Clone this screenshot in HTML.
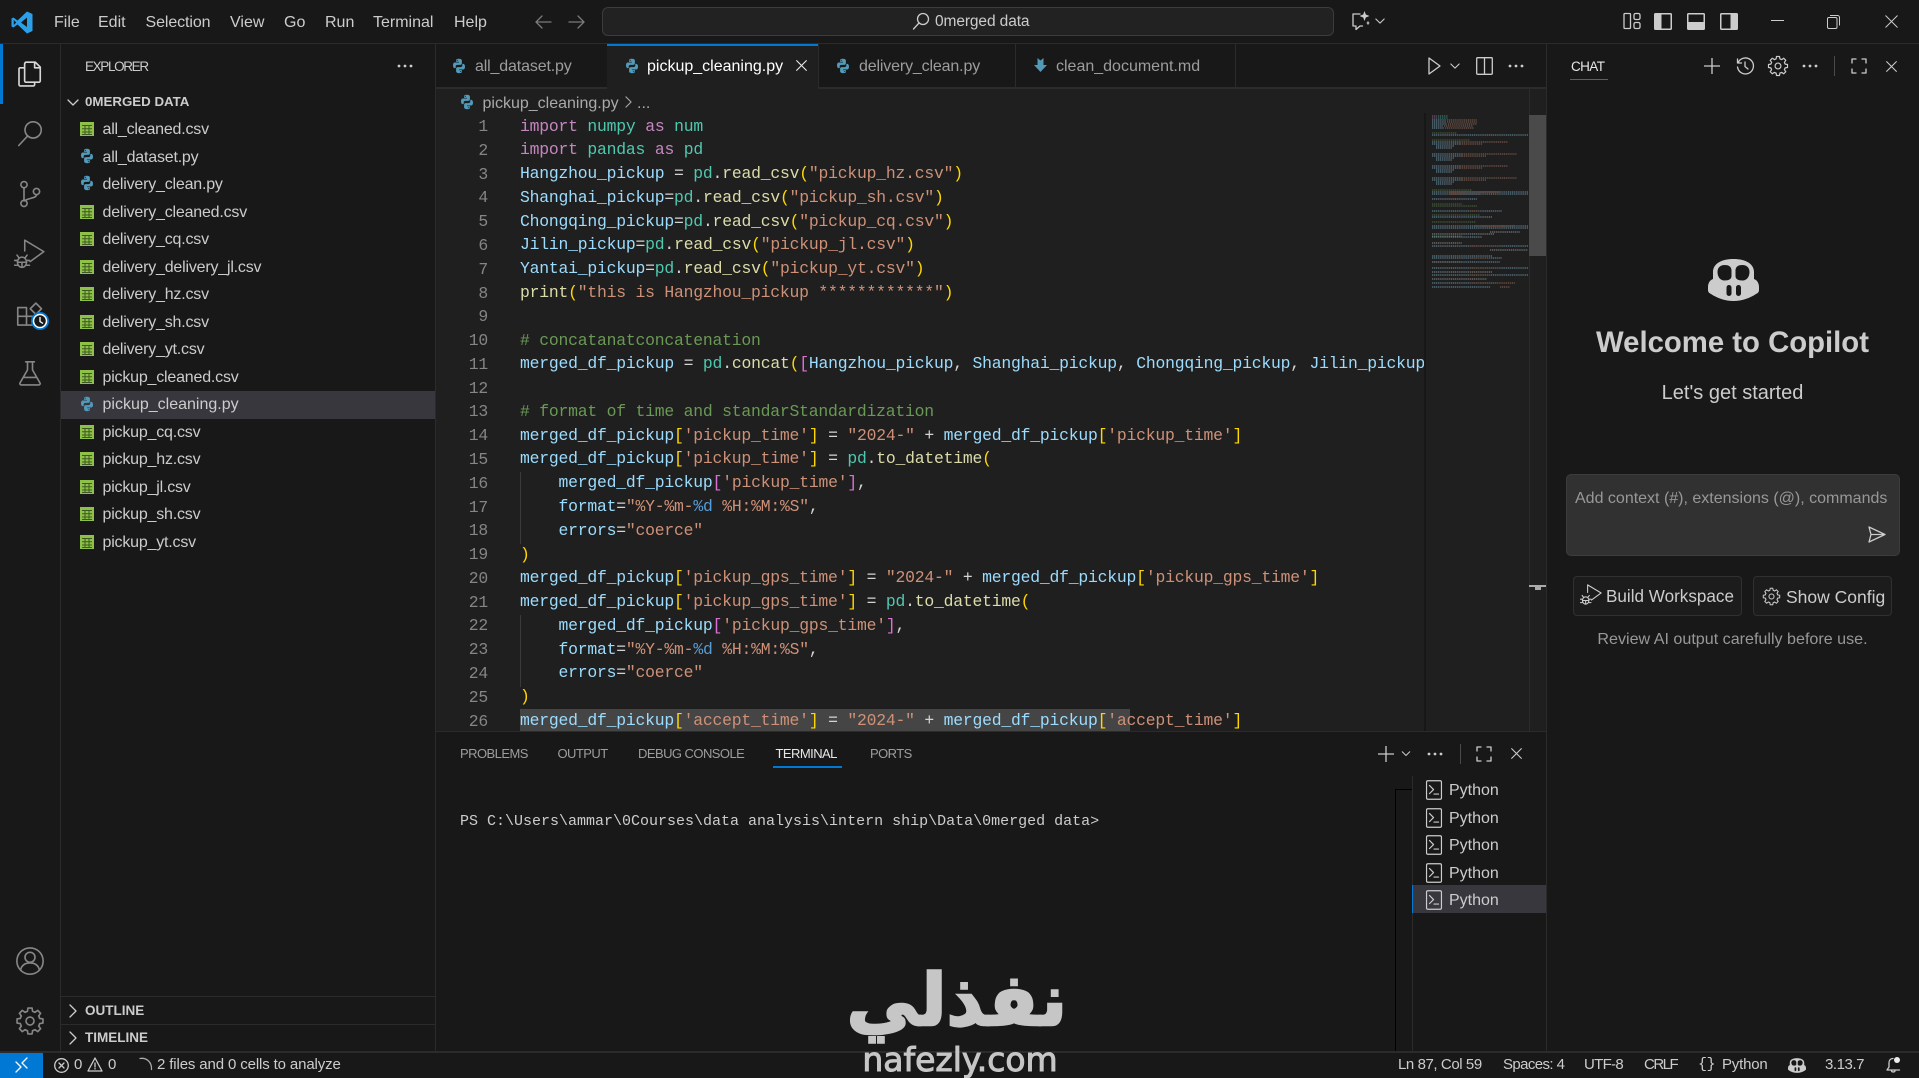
<!DOCTYPE html>
<html lang="en"><head><meta charset="utf-8"><title>pickup_cleaning.py - 0merged data</title>
<style>
html,body{margin:0;padding:0;background:#181818;width:1919px;height:1078px;overflow:hidden}
body{position:relative;font-family:"Liberation Sans",sans-serif;font-size:16px;color:#ccc}
.b{position:absolute;display:block}
.t{position:absolute;white-space:pre;line-height:20px;height:20px}
svg{position:absolute;overflow:visible}
.s{fill:none;stroke:currentColor;stroke-width:1.3;stroke-linecap:round;stroke-linejoin:round}
.h{font-weight:bold;font-size:13.3px}
.fl{letter-spacing:-.2px}
.tab{color:#9d9d9d;letter-spacing:-.15px}
.p{font-size:13px;letter-spacing:-.55px;color:#9d9d9d}
.st{font-size:15px;color:#ccc;letter-spacing:-.2px}
#codebg,#code{position:absolute;left:0;top:113px;width:1424px;height:618px;overflow:hidden;font-family:"Liberation Mono",monospace}
.l{position:absolute;left:520px;white-space:pre;font-size:16.4px;letter-spacing:-.21px;line-height:24px;height:24px;color:#d4d4d4}
.n{position:absolute;left:448px;width:40px;text-align:right;font-size:16.4px;letter-spacing:-.24px;line-height:24px;color:#858585}
.k{color:#c586c0}.m{color:#4ec9b0}.v{color:#9cdcfe}.f{color:#dcdcaa}.q{color:#ce9178}.c{color:#6a9955}.y{color:#ffd700}.u{color:#da70d6}.w{color:#569cd6}
</style></head><body>
<svg width="0" height="0" style="position:absolute">
<defs>
<symbol id="py" viewBox="0 0 16 16"><g fill="#519aba"><path d="M7.9 .8C5 .8 5.1 2 5.1 2v1.9h2.9v.6H3.9S2 4.3 2 7.2s1.6 2.9 1.6 2.9h1.1V8.6s0-1.7 1.7-1.7h2.9s1.6 0 1.6-1.6V2.5S10.8 .8 7.9 .8zM6.3 1.8a.55.55 0 1 1 0 1.1.55.55 0 0 1 0-1.1z"/><path transform="rotate(180 8 8)" d="M7.9 .8C5 .8 5.1 2 5.1 2v1.9h2.9v.6H3.9S2 4.3 2 7.2s1.6 2.9 1.6 2.9h1.1V8.6s0-1.7 1.7-1.7h2.9s1.6 0 1.6-1.6V2.5S10.8 .8 7.9 .8zM6.3 1.8a.55.55 0 1 1 0 1.1.55.55 0 0 1 0-1.1z"/></g></symbol>
<symbol id="csv" viewBox="0 0 14 14"><rect width="14" height="14" fill="#8dc149"/><path d="M2 3.5h10M2 6.8h10M2 10h10M2 12.5h10M5 3.5v9M9 3.5v9" stroke="#3d5a1e" stroke-width="1" fill="none"/></symbol>
<symbol id="gearP" viewBox="0 0 24 24"><g class="s"><circle cx="12" cy="12" r="3.2"/><g id="tt"><path id="t1" d="M8.94 4.61 9.93 4.27 10.36 1.63H13.64L14.07 4.27 15.06 4.61"/><use href="#t1" transform="rotate(45 12 12)"/><use href="#t1" transform="rotate(90 12 12)"/><use href="#t1" transform="rotate(135 12 12)"/><use href="#t1" transform="rotate(180 12 12)"/><use href="#t1" transform="rotate(225 12 12)"/><use href="#t1" transform="rotate(270 12 12)"/><use href="#t1" transform="rotate(315 12 12)"/></g></g></symbol>
<symbol id="cop" viewBox="0 0 51 42"><path fill="currentColor" d="M0 28c0-4 2-7 5-8V13C5 5 13 0 25.5 0S46 5 46 13v7c3 1 5 4 5 8v3c0 2-1 3-3 4-6 4-14 7-22.5 7S9 39 3 35c-2-1-3-2-3-4z"/><path fill="#181818" d="M9.500 13c0-4.500 3-7 7-7s7 1.500 7 5.500v5.500c0 3-2.500 4.500-7 4.500s-7-4-7-8.500zM41.500 13c0-4.500-3-7-7-7s-7 1.500-7 5.500v5.500c0 3 2.500 4.500 7 4.500s7-4 7-8.500z"/><rect x="18.500" y="26" width="5" height="11" rx="2.500" fill="#181818"/><rect x="28" y="26" width="5" height="11" rx="2.500" fill="#181818"/></symbol>
<symbol id="term" viewBox="0 0 18 22"><rect x=".8" y=".8" width="16.400" height="20.400" rx="1.500" class="s"/><path class="s" d="M4 6l4.500 4.500L4 15M9 15.500h5"/></symbol>
<symbol id="max" viewBox="0 0 16 16"><path class="s" stroke-width="1.300" d="M1 5V1h4M11 1h4v4M15 11v4h-4M5 15H1v-4"/></symbol>
<symbol id="x" viewBox="0 0 16 16"><path class="s" d="M2 2l12 12M14 2L2 14"/></symbol>
<symbol id="plus" viewBox="0 0 16 16"><path class="s" d="M8 0v16M0 8h16"/></symbol>
<symbol id="chev" viewBox="0 0 12 8"><path class="s" d="M1 1l5 5 5-5"/></symbol>
<symbol id="chr" viewBox="0 0 8 14"><path class="s" d="M1 1l6 6-6 6"/></symbol>
<symbol id="dots" viewBox="0 0 16 4"><g fill="currentColor"><circle cx="2" cy="2" r="1.400"/><circle cx="8" cy="2" r="1.400"/><circle cx="14" cy="2" r="1.400"/></g></symbol>
<symbol id="bug" viewBox="0 0 26 26"><g class="s"><path d="M9 10V1l16 9.600-11.500 8.400"/><ellipse cx="6.700" cy="19.500" rx="3.800" ry="4.300"/><path d="M3 18H.5M3 22H.5M10.500 18H13M10.500 22H13M4 15.500l-1.500-2M9.500 15.500l1.500-2M3 19.500h7.500M6.700 19.500v4"/></g></symbol>
</defs></svg>

<!-- surfaces -->
<div class="b" style="left:0;top:0;width:1919px;height:43px;background:#181818"></div>
<div class="b" style="left:0;top:43px;width:1919px;height:1px;background:#2b2b2b"></div>
<div class="b" style="left:435px;top:44px;width:1111px;height:687px;background:#1f1f1f"></div>
<div class="b" style="left:435px;top:44px;width:1111px;height:43px;background:#181818"></div>
<div class="b" style="left:607px;top:44px;width:211px;height:44px;background:#1f1f1f;border-top:2px solid #0078d4;box-sizing:border-box"></div>
<div class="b" style="left:435px;top:87px;width:172px;height:1.500px;background:#2b2b2b"></div>
<div class="b" style="left:818px;top:87px;width:728px;height:1.500px;background:#2b2b2b"></div>
<div class="b" style="left:818px;top:44px;width:1px;height:43px;background:#2b2b2b"></div>
<div class="b" style="left:1015px;top:44px;width:1px;height:43px;background:#2b2b2b"></div>
<div class="b" style="left:1235px;top:44px;width:1px;height:43px;background:#2b2b2b"></div>
<div class="b" style="left:60px;top:44px;width:1px;height:1007px;background:#2b2b2b"></div>
<div class="b" style="left:434.500px;top:44px;width:1px;height:1007px;background:#2b2b2b"></div>
<div class="b" style="left:1546px;top:44px;width:1px;height:1007px;background:#2b2b2b"></div>
<div class="b" style="left:436px;top:731px;width:1110px;height:1px;background:#2b2b2b"></div>
<div class="b" style="left:0;top:1051px;width:1919px;height:2px;background:#2b2b2b"></div>
<div class="b" style="left:0;top:44px;width:2.500px;height:60px;background:#0078d4"></div>

<!-- title bar -->
<svg style="left:11px;top:11px;color:#2e9fe6" width="22" height="23" viewBox="0 0 22 23"><path fill="#2b9fe8" d="M16 .5 21.500 3v17L16 22.500 6.500 13.500 2.500 16.500.5 15.500V7.500l2-1 4 3L16 .5zM16 6.500 10 11.500l6 4.500V6.500zM2.800 9v5l2.400-2.500L2.800 9z"/></svg>
<span class="t" style="left:54px;top:12.500px">File</span>
<span class="t" style="left:98px;top:12.500px">Edit</span>
<span class="t" style="left:145.500px;top:12.500px;letter-spacing:-.1px">Selection</span>
<span class="t" style="left:230px;top:12.500px">View</span>
<span class="t" style="left:284px;top:12.500px">Go</span>
<span class="t" style="left:325px;top:12.500px">Run</span>
<span class="t" style="left:373px;top:12.500px">Terminal</span>
<span class="t" style="left:454px;top:12.500px">Help</span>
<svg style="left:535px;top:15px;color:#7a7a7a" width="17" height="14" viewBox="0 0 17 14"><path class="s" d="M16 7H1M7 1 1 7l6 6"/></svg>
<svg style="left:568px;top:15px;color:#7a7a7a" width="17" height="14" viewBox="0 0 17 14"><path class="s" d="M1 7h15M10 1l6 6-6 6"/></svg>
<div class="b" style="left:602px;top:7px;width:732px;height:29px;box-sizing:border-box;background:#222;border:1px solid #3c3c3c;border-radius:6px"></div>
<svg style="left:912px;top:12px;color:#ccc" width="18" height="18" viewBox="0 0 18 18"><circle class="s" cx="11" cy="7" r="5.500"/><path class="s" d="M7 11 1.500 17"/></svg>
<span class="t" style="left:935px;top:12px;letter-spacing:-.1px;font-size:15.500px">0merged data</span>
<svg style="left:1351px;top:11px;color:#ccc" width="20" height="20" viewBox="0 0 20 20"><path class="s" stroke-width="1.500" d="M9 3H2v12h3v3.500L9 15h2.500M17 11v2"/><path fill="#ccc" d="M13.500 0l1.300 3.500L18.500 5l-3.700 1.500-1.300 3.500-1.300-3.500L8.500 5l3.700-1.500zM17 10l.6 1.500 1.400.5-1.400.5-.6 1.500-.6-1.500-1.400-.5 1.400-.5z"/></svg>
<svg style="left:1375px;top:18px;color:#ccc" width="10" height="7"><use href="#chev" width="10" height="7"/></svg>
<svg style="left:1623px;top:12px;color:#ccc" width="18" height="18" viewBox="0 0 18 18"><rect class="s" x="1" y="1.500" width="6.500" height="15" rx="1"/><rect class="s" x="11" y="1.500" width="6" height="6" rx="1.500"/><rect class="s" x="11" y="10.500" width="6" height="6" rx="1.500"/></svg>
<svg style="left:1654px;top:12px;color:#ccc" width="18" height="18" viewBox="0 0 18 18"><rect x="0" y="1" width="18" height="17" rx="1.500" fill="#ccc"/><rect x="7.500" y="2.500" width="9" height="14" fill="#181818"/></svg>
<svg style="left:1687px;top:12px;color:#ccc" width="18" height="18" viewBox="0 0 18 18"><rect x="0" y="1" width="18" height="17" rx="1.500" fill="#ccc"/><rect x="1.500" y="2.500" width="15" height="7.500" fill="#181818"/></svg>
<svg style="left:1720px;top:12px;color:#ccc" width="18" height="18" viewBox="0 0 18 18"><rect x="0" y="1" width="18" height="17" rx="1.500" fill="#ccc"/><rect x="1.500" y="2.500" width="9" height="14" fill="#181818"/></svg>
<div class="b" style="left:1771px;top:20px;width:13px;height:1px;background:#ccc"></div>
<svg style="left:1827px;top:15px;color:#ccc" width="13" height="14" viewBox="0 0 13 14"><rect x=".5" y="2.500" width="9.500" height="11" rx="1.500" fill="none" stroke="#ccc"/><path fill="none" stroke="#ccc" d="M3 .5h7.500a2 2 0 0 1 2 2v8"/></svg>
<svg style="left:1885px;top:15px;color:#ccc" width="13" height="13" viewBox="0 0 13 13"><path fill="none" stroke="#ccc" d="M.5.500l12 12M12.500.5l-12 12"/></svg>

<!-- activity bar -->
<svg style="left:14px;top:59px;color:#d7d7d7" width="30" height="30" viewBox="0 0 24 24"><g class="s" stroke-width="1.250"><path d="M9.500 2.500H17l4 4v11a1 1 0 0 1-1 1H9.500a1 1 0 0 1-1-1v-13a2 2 0 0 1 1-2z"/><path d="M16.500 2.500V7H21"/><path d="M8.500 7H5a1 1 0 0 0-1 1v12.500a1 1 0 0 0 1 1h10.500a1 1 0 0 0 1-1V18.500"/></g></svg>
<svg style="left:15px;top:118px;color:#868686" width="30" height="30" viewBox="0 0 24 24"><circle class="s" cx="14.500" cy="9.500" r="6.500"/><path class="s" d="M10 14.500 3 22"/></svg>
<svg style="left:14px;top:179px;color:#868686" width="30" height="30" viewBox="0 0 24 24"><g class="s"><circle cx="8" cy="4.500" r="2.500"/><circle cx="8" cy="19.500" r="2.500"/><circle cx="18" cy="10" r="2.500"/><path d="M8 7v10M18 12.500c0 3-6 2.500-10 5"/></g></svg>
<svg style="left:14px;top:239px;color:#868686" width="31" height="31"><use href="#bug" width="31" height="31"/></svg>
<svg style="left:14px;top:300px;color:#868686" width="30" height="30" viewBox="0 0 24 24"><g class="s"><path d="M3 6h7v7H3zM3 13h7v7H3zM10 13h7v7h-7z"/><path d="M13 7l4.500-4.500L22 7l-4.500 4.500z"/></g></svg>
<svg style="left:30px;top:311px" width="20" height="20" viewBox="0 0 20 20"><circle cx="10" cy="10" r="9" fill="#0078d4"/><circle cx="10" cy="10" r="6.500" fill="#181818" stroke="#fff" stroke-width="1.500"/><path d="M10 6v4.500l3 2" fill="none" stroke="#fff" stroke-width="1.300"/></svg>
<svg style="left:15px;top:358px;color:#868686" width="30" height="30" viewBox="0 0 24 24"><path class="s" d="M8.500 3h7M10 3v6.500L4 20a1 1 0 0 0 .9 1.500h14.200A1 1 0 0 0 20 20L14 9.500V3M7.500 15.500h9"/></svg>
<svg style="left:15px;top:946px;color:#868686" width="30" height="30" viewBox="0 0 24 24"><g class="s"><circle cx="12" cy="12" r="10.500"/><circle cx="12" cy="9" r="4"/><path d="M4.500 19c1-4 4-5.500 7.500-5.500s6.500 1.500 7.500 5.500"/></g></svg>
<svg style="left:15px;top:1006px;color:#868686" width="30" height="30"><use href="#gearP" width="30" height="30"/></svg>

<!-- sidebar -->
<span class="t" style="left:85px;top:57px;font-size:13.500px;letter-spacing:-1.350px;color:#ccc">EXPLORER</span>
<svg style="left:397px;top:64px;color:#ccc" width="16" height="4"><use href="#dots" width="16" height="4"/></svg>
<svg style="left:67px;top:99px;color:#ccc" width="12" height="8"><use href="#chev" width="12" height="8"/></svg>
<span class="t h" style="left:85px;top:92px">0MERGED DATA</span>
<div class="b" style="left:61px;top:390.500px;width:373.500px;height:28px;background:#37373d"></div>
<svg style="left:80px;top:122px" width="14" height="14"><use href="#csv" width="14" height="14"/></svg><span class="t fl" style="left:102.500px;top:120.200px">all_cleaned.csv</span>
<svg style="left:79px;top:148px" width="16" height="16"><use href="#py" width="16" height="16"/></svg><span class="t fl" style="left:102.500px;top:147.700px">all_dataset.py</span>
<svg style="left:79px;top:175px" width="16" height="16"><use href="#py" width="16" height="16"/></svg><span class="t fl" style="left:102.500px;top:175.200px">delivery_clean.py</span>
<svg style="left:80px;top:205px" width="14" height="14"><use href="#csv" width="14" height="14"/></svg><span class="t fl" style="left:102.500px;top:202.700px">delivery_cleaned.csv</span>
<svg style="left:80px;top:232px" width="14" height="14"><use href="#csv" width="14" height="14"/></svg><span class="t fl" style="left:102.500px;top:230.200px">delivery_cq.csv</span>
<svg style="left:80px;top:260px" width="14" height="14"><use href="#csv" width="14" height="14"/></svg><span class="t fl" style="left:102.500px;top:257.700px">delivery_delivery_jl.csv</span>
<svg style="left:80px;top:287px" width="14" height="14"><use href="#csv" width="14" height="14"/></svg><span class="t fl" style="left:102.500px;top:285.200px">delivery_hz.csv</span>
<svg style="left:80px;top:315px" width="14" height="14"><use href="#csv" width="14" height="14"/></svg><span class="t fl" style="left:102.500px;top:312.700px">delivery_sh.csv</span>
<svg style="left:80px;top:342px" width="14" height="14"><use href="#csv" width="14" height="14"/></svg><span class="t fl" style="left:102.500px;top:340.200px">delivery_yt.csv</span>
<svg style="left:80px;top:370px" width="14" height="14"><use href="#csv" width="14" height="14"/></svg><span class="t fl" style="left:102.500px;top:367.700px">pickup_cleaned.csv</span>
<svg style="left:79px;top:396px" width="16" height="16"><use href="#py" width="16" height="16"/></svg><span class="t" style="left:102.500px;top:395.200px">pickup_cleaning.py</span>
<svg style="left:80px;top:425px" width="14" height="14"><use href="#csv" width="14" height="14"/></svg><span class="t fl" style="left:102.500px;top:422.700px">pickup_cq.csv</span>
<svg style="left:80px;top:452px" width="14" height="14"><use href="#csv" width="14" height="14"/></svg><span class="t fl" style="left:102.500px;top:450.200px">pickup_hz.csv</span>
<svg style="left:80px;top:480px" width="14" height="14"><use href="#csv" width="14" height="14"/></svg><span class="t fl" style="left:102.500px;top:477.700px">pickup_jl.csv</span>
<svg style="left:80px;top:507px" width="14" height="14"><use href="#csv" width="14" height="14"/></svg><span class="t fl" style="left:102.500px;top:505.200px">pickup_sh.csv</span>
<svg style="left:80px;top:535px" width="14" height="14"><use href="#csv" width="14" height="14"/></svg><span class="t fl" style="left:102.500px;top:532.700px">pickup_yt.csv</span>
<div class="b" style="left:61px;top:996px;width:374px;height:1px;background:#2b2b2b"></div>
<div class="b" style="left:61px;top:1024px;width:374px;height:1px;background:#2b2b2b"></div>
<svg style="left:69px;top:1004px;color:#ccc" width="8" height="14"><use href="#chr" width="8" height="14"/></svg>
<span class="t h" style="left:85px;top:1001px;font-size:13.500px">OUTLINE</span>
<svg style="left:69px;top:1031px;color:#ccc" width="8" height="14"><use href="#chr" width="8" height="14"/></svg>
<span class="t h" style="left:85px;top:1028px;font-size:13.500px">TIMELINE</span>

<!-- tabs -->
<svg style="left:451px;top:58px" width="16" height="16"><use href="#py" width="16" height="16"/></svg>
<span class="t tab" style="left:475px;top:57px">all_dataset.py</span>
<svg style="left:624px;top:58px" width="16" height="16"><use href="#py" width="16" height="16"/></svg>
<span class="t" style="left:647px;top:57px;color:#fff">pickup_cleaning.py</span>
<svg style="left:795px;top:59px;color:#eee" width="13" height="13"><use href="#x" width="13" height="13"/></svg>
<svg style="left:835px;top:58px" width="16" height="16"><use href="#py" width="16" height="16"/></svg>
<span class="t tab" style="left:859px;top:57px">delivery_clean.py</span>
<svg style="left:1034px;top:58px" width="13" height="14" viewBox="0 0 13 14"><path fill="#519aba" d="M3.500 0 6.500 2.500 9.500 0V7H13L6.500 14 0 7H3.500Z"/></svg>
<span class="t" style="left:1056px;top:57px;color:#9d9d9d">clean_document.md</span>
<svg style="left:1428px;top:57px;color:#ccc" width="13" height="18" viewBox="0 0 13 18"><path class="s" d="M1 1l11 8-11 8z"/></svg>
<svg style="left:1450px;top:63px;color:#ccc" width="10" height="7"><use href="#chev" width="10" height="7"/></svg>
<svg style="left:1476px;top:57px;color:#ccc" width="17" height="18" viewBox="0 0 17 18"><rect class="s" x=".7" y=".7" width="15.600" height="16.600" rx="1"/><path class="s" d="M8.500 1v16"/></svg>
<svg style="left:1508px;top:64px;color:#ccc" width="16" height="4"><use href="#dots" width="16" height="4"/></svg>

<!-- breadcrumb -->
<svg style="left:459px;top:94px" width="16" height="16"><use href="#py" width="16" height="16"/></svg>
<span class="t" style="left:482.500px;top:93.500px;color:#a9a9a9">pickup_cleaning.py</span>
<svg style="left:625px;top:96px;color:#a9a9a9" width="7" height="12"><use href="#chr" width="7" height="12"/></svg>
<span class="t" style="left:637px;top:93.500px;color:#a9a9a9">...</span>

<!-- code -->
<div id="codebg">
<div class="b" style="left:520.400px;top:359px;width:1px;height:72px;background:#3a3a3a"></div>
<div class="b" style="left:520.400px;top:502px;width:1px;height:72px;background:#3a3a3a"></div>
<div class="b" style="left:520px;top:596px;width:610px;height:24px;background:#454545"></div>
</div>
<div id="code">
<span class="n" style="top:2px">1</span><span class="l" style="top:1.500px"><span class="k">import</span> <span class="m">numpy</span> <span class="k">as</span> <span class="m">num</span></span>
<span class="n" style="top:25.800px">2</span><span class="l" style="top:25.300px"><span class="k">import</span> <span class="m">pandas</span> <span class="k">as</span> <span class="m">pd</span></span>
<span class="n" style="top:49.600px">3</span><span class="l" style="top:49.100px"><span class="v">Hangzhou_pickup</span> = <span class="m">pd</span>.<span class="f">read_csv</span><span class="y">(</span><span class="q">"pickup_hz.csv"</span><span class="y">)</span></span>
<span class="n" style="top:73.300px">4</span><span class="l" style="top:72.800px"><span class="v">Shanghai_pickup</span>=<span class="m">pd</span>.<span class="f">read_csv</span><span class="y">(</span><span class="q">"pickup_sh.csv"</span><span class="y">)</span></span>
<span class="n" style="top:97.100px">5</span><span class="l" style="top:96.600px"><span class="v">Chongqing_pickup</span>=<span class="m">pd</span>.<span class="f">read_csv</span><span class="y">(</span><span class="q">"pickup_cq.csv"</span><span class="y">)</span></span>
<span class="n" style="top:120.900px">6</span><span class="l" style="top:120.400px"><span class="v">Jilin_pickup</span>=<span class="m">pd</span>.<span class="f">read_csv</span><span class="y">(</span><span class="q">"pickup_jl.csv"</span><span class="y">)</span></span>
<span class="n" style="top:144.700px">7</span><span class="l" style="top:144.200px"><span class="v">Yantai_pickup</span>=<span class="m">pd</span>.<span class="f">read_csv</span><span class="y">(</span><span class="q">"pickup_yt.csv"</span><span class="y">)</span></span>
<span class="n" style="top:168.500px">8</span><span class="l" style="top:168px"><span class="f">print</span><span class="y">(</span><span class="q">"this is Hangzhou_pickup ************"</span><span class="y">)</span></span>
<span class="n" style="top:192.200px">9</span>
<span class="n" style="top:216px">10</span><span class="l" style="top:215.500px"><span class="c"># concatanatconcatenation</span></span>
<span class="n" style="top:239.800px">11</span><span class="l" style="top:239.300px"><span class="v">merged_df_pickup</span> = <span class="m">pd</span>.<span class="f">concat</span><span class="y">(</span><span class="u">[</span><span class="v">Hangzhou_pickup</span>, <span class="v">Shanghai_pickup</span>, <span class="v">Chongqing_pickup</span>, <span class="v">Jilin_pickup</span>, <span class="v">Yantai_pickup</span><span class="u">]</span><span class="y">)</span></span>
<span class="n" style="top:263.600px">12</span>
<span class="n" style="top:287.400px">13</span><span class="l" style="top:286.900px"><span class="c"># format of time and standarStandardization</span></span>
<span class="n" style="top:311.100px">14</span><span class="l" style="top:310.600px"><span class="v">merged_df_pickup</span><span class="y">[</span><span class="q">'pickup_time'</span><span class="y">]</span> = <span class="q">"2024-"</span> + <span class="v">merged_df_pickup</span><span class="y">[</span><span class="q">'pickup_time'</span><span class="y">]</span></span>
<span class="n" style="top:334.900px">15</span><span class="l" style="top:334.400px"><span class="v">merged_df_pickup</span><span class="y">[</span><span class="q">'pickup_time'</span><span class="y">]</span> = <span class="m">pd</span>.<span class="f">to_datetime</span><span class="y">(</span></span>
<span class="n" style="top:358.700px">16</span><span class="l" style="top:358.200px">    <span class="v">merged_df_pickup</span><span class="u">[</span><span class="q">'pickup_time'</span><span class="u">]</span>,</span>
<span class="n" style="top:382.500px">17</span><span class="l" style="top:382px">    <span class="v">format</span>=<span class="q">"%Y-%m-</span><span class="w">%d</span><span class="q"> %H:%M:%S"</span>,</span>
<span class="n" style="top:406.300px">18</span><span class="l" style="top:405.800px">    <span class="v">errors</span>=<span class="q">"coerce"</span></span>
<span class="n" style="top:430px">19</span><span class="l" style="top:429.500px"><span class="y">)</span></span>
<span class="n" style="top:453.800px">20</span><span class="l" style="top:453.300px"><span class="v">merged_df_pickup</span><span class="y">[</span><span class="q">'pickup_gps_time'</span><span class="y">]</span> = <span class="q">"2024-"</span> + <span class="v">merged_df_pickup</span><span class="y">[</span><span class="q">'pickup_gps_time'</span><span class="y">]</span></span>
<span class="n" style="top:477.600px">21</span><span class="l" style="top:477.100px"><span class="v">merged_df_pickup</span><span class="y">[</span><span class="q">'pickup_gps_time'</span><span class="y">]</span> = <span class="m">pd</span>.<span class="f">to_datetime</span><span class="y">(</span></span>
<span class="n" style="top:501.400px">22</span><span class="l" style="top:500.900px">    <span class="v">merged_df_pickup</span><span class="u">[</span><span class="q">'pickup_gps_time'</span><span class="u">]</span>,</span>
<span class="n" style="top:525.200px">23</span><span class="l" style="top:524.700px">    <span class="v">format</span>=<span class="q">"%Y-%m-</span><span class="w">%d</span><span class="q"> %H:%M:%S"</span>,</span>
<span class="n" style="top:548.900px">24</span><span class="l" style="top:548.400px">    <span class="v">errors</span>=<span class="q">"coerce"</span></span>
<span class="n" style="top:572.700px">25</span><span class="l" style="top:572.200px"><span class="y">)</span></span>
<span class="n" style="top:596.500px">26</span><span class="l" style="top:596px"><span class="v">merged_df_pickup</span><span class="y">[</span><span class="q">'accept_time'</span><span class="y">]</span> = <span class="q">"2024-"</span> + <span class="v">merged_df_pickup</span><span class="y">[</span><span class="q">'accept_time'</span><span class="y">]</span></span>
</div>

<!-- minimap + scrollbar -->
<div class="b" style="left:1424px;top:113px;width:2px;height:618px;background:#171717"></div>
<div class="b" style="left:1529px;top:88px;width:1px;height:643px;background:#2b2b2b"></div>
<div class="b" style="left:1529px;top:115px;width:17px;height:141px;background:#4a4a4a"></div>
<div class="b" style="left:1529px;top:585px;width:17px;height:2px;background:#aaa"></div>
<div class="b" style="left:1535px;top:587px;width:6px;height:3px;background:#aaa"></div>
<svg style="left:0;top:0" width="1919" height="1078" viewBox="0 0 1919 1078" fill="none" stroke-width=".9" stroke-dasharray="1.2 .7" opacity=".6">
<path stroke="#c586c0" d="M1432 116h5M1432 118h5"/>
<path stroke="#4ec9b0" d="M1438 116h10M1438 118h10"/>
<path stroke="#9cdcfe" d="M1432 120h14M1432 122h14M1432 124h15M1432 126h11M1432 128h12M1432 135h96M1432 142h28M1432 144h28M1436 146h18M1436 148h16M1432 154h30M1432 156h30M1436 158h18M1436 160h16M1432 166h28M1432 168h28M1436 170h18M1436 172h16M1432 178h30M1432 180h30M1436 182h18M1436 184h16M1432 192h96M1432 194h96M1432 199h45M1432 211h70M1432 217h60M1432 226h96M1432 228h96M1432 237h50M1432 246h96M1432 256h60M1432 258h70M1432 262h68M1432 268h96M1432 275h96M1432 283h66M1432 287h58"/>
<path stroke="#ce9178" d="M1447 120h30M1447 122h30M1448 124h29M1444 126h29M1445 128h29M1460 142h48M1460 144h22M1462 154h55M1462 156h24M1460 166h48M1460 168h22M1462 178h55M1462 180h24M1450 192h50M1450 194h30M1445 199h10M1470 211h10M1475 226h40M1470 246h30M1470 258h20M1470 268h30M1470 275h20M1470 283h45M1500 287h10"/>
<path stroke="#6a9955" d="M1432 133h25M1432 140h38M1432 190h40M1432 204h30M1432 206h45M1432 215h48M1432 222h44M1432 236h30"/>
<path stroke="#d4d4d4" d="M1432 234h62M1432 243h30M1432 262h30M1432 272h60M1432 279h55M1490 232h30M1490 250h38"/>
</svg>

<!-- panel -->
<span class="t p" style="left:460px;top:744px">PROBLEMS</span>
<span class="t p" style="left:557.500px;top:744px">OUTPUT</span>
<span class="t p" style="left:638px;top:744px">DEBUG CONSOLE</span>
<span class="t p" style="left:775.500px;top:744px;color:#e7e7e7">TERMINAL</span>
<span class="t p" style="left:870px;top:744px">PORTS</span>
<div class="b" style="left:773px;top:766px;width:69px;height:1.500px;background:#0078d4"></div>
<svg style="left:1378px;top:746px;color:#ccc" width="16" height="16"><use href="#plus" width="16" height="16"/></svg>
<svg style="left:1401px;top:751px;color:#ccc" width="10" height="6"><use href="#chev" width="10" height="6"/></svg>
<svg style="left:1427px;top:752px;color:#ccc" width="16" height="4"><use href="#dots" width="16" height="4"/></svg>
<div class="b" style="left:1460px;top:744px;width:1px;height:20px;background:#4a4a4a"></div>
<svg style="left:1476px;top:746px;color:#ccc" width="16" height="16"><use href="#max" width="16" height="16"/></svg>
<svg style="left:1510px;top:747px;color:#ccc" width="13" height="13"><use href="#x" width="13" height="13"/></svg>
<span class="t" style="left:460px;top:812px;font-family:'Liberation Mono',monospace;font-size:15px;color:#ccc">PS C:\Users\ammar\0Courses\data analysis\intern ship\Data\0merged data&gt;</span>
<div class="b" style="left:1395px;top:789px;width:1px;height:262px;background:#000"></div>
<div class="b" style="left:1395px;top:788.500px;width:17px;height:1px;background:#000"></div>
<div class="b" style="left:1412px;top:776px;width:1px;height:275px;background:#2b2b2b"></div>
<div class="b" style="left:1412px;top:885px;width:134px;height:28px;background:#37373d;border-left:1px solid #0078d4;box-sizing:border-box"></div>
<svg style="left:1425px;top:780px;color:#ccc" width="18" height="20"><use href="#term" width="18" height="20"/></svg><span class="t" style="left:1449px;top:780.500px">Python</span>
<svg style="left:1425px;top:808px;color:#ccc" width="18" height="20"><use href="#term" width="18" height="20"/></svg><span class="t" style="left:1449px;top:808.500px">Python</span>
<svg style="left:1425px;top:835px;color:#ccc" width="18" height="20"><use href="#term" width="18" height="20"/></svg><span class="t" style="left:1449px;top:835.500px">Python</span>
<svg style="left:1425px;top:863px;color:#ccc" width="18" height="20"><use href="#term" width="18" height="20"/></svg><span class="t" style="left:1449px;top:863.500px">Python</span>
<svg style="left:1425px;top:890px;color:#ccc" width="18" height="20"><use href="#term" width="18" height="20"/></svg><span class="t" style="left:1449px;top:890.500px">Python</span>

<!-- chat -->
<span class="t" style="left:1571px;top:57px;font-size:13.500px;letter-spacing:-.6px;color:#e7e7e7">CHAT</span>
<div class="b" style="left:1569.500px;top:78.500px;width:38px;height:1.500px;background:#0078d4"></div>
<svg style="left:1704px;top:58px;color:#ccc" width="16" height="16"><use href="#plus" width="16" height="16"/></svg>
<svg style="left:1736px;top:57px;color:#ccc" width="18" height="18" viewBox="0 0 18 18"><path class="s" d="M1.500 2v4h4M2 6a8 8 0 1 1-.5 4M9 5v4.500l3 2.500"/></svg>
<svg style="left:1767px;top:55px;color:#ccc" width="22" height="22"><use href="#gearP" width="22" height="22"/></svg>
<svg style="left:1802px;top:64px;color:#ccc" width="16" height="4"><use href="#dots" width="16" height="4"/></svg>
<div class="b" style="left:1834px;top:56px;width:1px;height:20px;background:#4a4a4a"></div>
<svg style="left:1851px;top:58px;color:#ccc" width="16" height="16"><use href="#max" width="16" height="16"/></svg>
<svg style="left:1885px;top:60px;color:#ccc" width="13" height="13"><use href="#x" width="13" height="13"/></svg>
<svg style="left:1707.500px;top:259px;color:#ccc" width="51" height="42"><use href="#cop" width="51" height="42"/></svg>
<div class="b" style="left:1546px;top:327px;width:373px;text-align:center;font-size:29.300px;font-weight:bold;line-height:32px;color:#ccc">Welcome to Copilot</div>
<div class="b" style="left:1546px;top:382px;width:373px;text-align:center;font-size:20px;line-height:22px;color:#ccc">Let's get started</div>
<div class="b" style="left:1566px;top:474px;width:334px;height:82px;box-sizing:border-box;background:#313131;border:1px solid #3c3c3c;border-radius:5px"></div>
<span class="t" style="left:1575px;top:488.500px;color:#989898;font-size:16px">Add context (#), extensions (@), commands</span>
<svg style="left:1868px;top:526px;color:#ccc" width="18" height="17" viewBox="0 0 18 17"><path class="s" d="M1 1l16 7.500L1 16l2-7.500zM3 8.500h14"/></svg>
<div class="b" style="left:1573px;top:576px;width:169px;height:40px;box-sizing:border-box;background:#1c1c1c;border:1px solid #303030;border-radius:4px"></div>
<svg style="left:1580px;top:584px;color:#ccc" width="22" height="22"><use href="#bug" width="22" height="22"/></svg>
<span class="t" style="left:1606px;top:587px;font-size:17.100px">Build Workspace</span>
<div class="b" style="left:1753px;top:576px;width:139px;height:40px;box-sizing:border-box;background:#1c1c1c;border:1px solid #303030;border-radius:4px"></div>
<svg style="left:1762px;top:587px;color:#ccc" width="19" height="19"><use href="#gearP" width="19" height="19"/></svg>
<span class="t" style="left:1786px;top:587px;font-size:17.500px">Show Config</span>
<div class="b" style="left:1546px;top:629px;width:373px;text-align:center;font-size:16.100px;line-height:20px;color:#989898">Review AI output carefully before use.</div>

<!-- status bar -->
<div class="b" style="left:0;top:1053px;width:43px;height:25px;background:#0078d4"></div>
<svg style="left:15px;top:1058px;color:#fff" width="13" height="14" viewBox="0 0 13 14"><path class="s" d="M1 4l5 5-5 5M12 0 7 5l5 5"/></svg>
<svg style="left:54px;top:1058px;color:#ccc" width="15" height="15" viewBox="0 0 15 15"><circle class="s" cx="7.500" cy="7.500" r="6.800"/><path class="s" d="M5 5l5 5M10 5l-5 5"/></svg>
<span class="t st" style="left:74px;top:1055px">0</span>
<svg style="left:87px;top:1057px;color:#ccc" width="16" height="15" viewBox="0 0 16 15"><path class="s" d="M8 1l7 13H1zM8 6v4M8 11.500v.5"/></svg>
<span class="t st" style="left:108px;top:1055px">0</span>
<svg style="left:139px;top:1057px;color:#aaa" width="14" height="14" viewBox="0 0 14 14"><path class="s" d="M1 1.500c6-1 12 3 11.500 11"/></svg>
<span class="t st" style="left:157px;top:1055px;letter-spacing:-.13px">2 files and 0 cells to analyze</span>
<span class="t st" style="left:1398px;top:1055px;letter-spacing:-.42px">Ln 87, Col 59</span>
<span class="t st" style="left:1503px;top:1055px;letter-spacing:-.6px">Spaces: 4</span>
<span class="t st" style="left:1584px;top:1055px;letter-spacing:-.7px">UTF-8</span>
<span class="t st" style="left:1644px;top:1055px;letter-spacing:-1.500px">CRLF</span>
<span class="t st" style="left:1698px;top:1055px;font-family:'Liberation Mono',monospace;letter-spacing:-.5px">{}</span>
<span class="t st" style="left:1722px;top:1055px">Python</span>
<svg style="left:1788px;top:1058px;color:#ccc" width="18" height="15"><use href="#cop" width="18" height="15"/></svg>
<span class="t st" style="left:1825px;top:1055px;letter-spacing:-.45px">3.13.7</span>
<svg style="left:1886px;top:1056px;color:#ccc" width="15" height="18" viewBox="0 0 15 18"><path class="s" d="M7 2.500C4 2.500 3 5 3 7v4l-2 3h12.500M5.500 14.500c0 2 3.500 2 3.500 0"/><circle cx="11" cy="4" r="3" fill="#eee"/></svg>

<!-- watermark -->
<div class="b" style="left:854px;top:960px;width:213px;height:90px;text-align:center;font-family:'DejaVu Sans',sans-serif;font-weight:bold;font-size:72px;line-height:80px;color:#c6c6c6;white-space:nowrap;-webkit-text-stroke:2.500px #c6c6c6" lang="ar" dir="rtl">نفذلي</div>
<div class="b" style="left:850px;top:1042px;width:220px;text-align:center;font-family:'DejaVu Sans',sans-serif;font-size:33px;line-height:36px;color:#c6c6c6;white-space:nowrap;-webkit-text-stroke:1px #c6c6c6">nafezly.com</div>
</body></html>
